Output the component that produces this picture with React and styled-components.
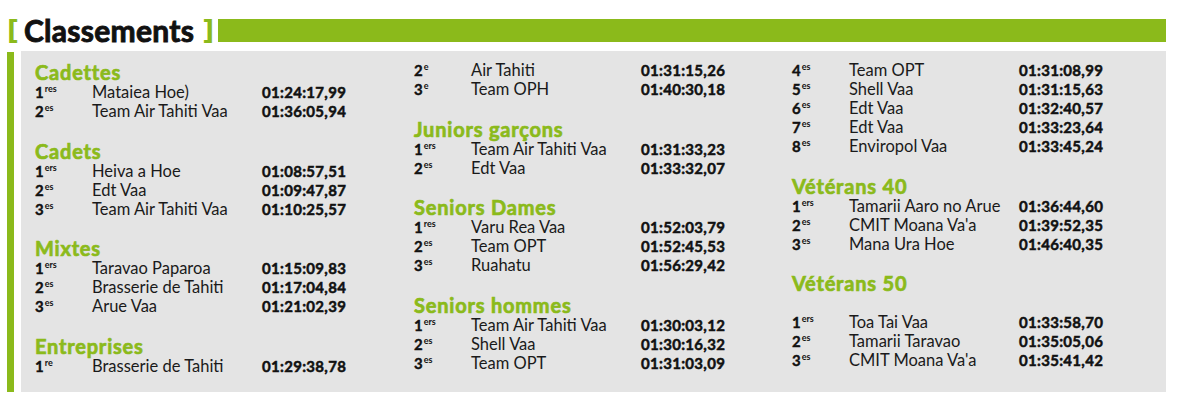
import React from 'react';
import styled, { createGlobalStyle } from 'styled-components';

const GREEN = '#8bba1b';

const GlobalStyle = createGlobalStyle`
  html, body {
    margin: 0;
    padding: 0;
    background: #fff;
  }
  body {
    font-family: Lato, "Open Sans", sans-serif;
    color: #111;
  }
`;

const Page = styled.div`
  width: 1159px;
  padding: 15px 0 0 7px;
`;

const Header = styled.div`
  display: flex;
  align-items: center;
  height: 30px;
  margin-bottom: 6px;
`;

const Bracket = styled.span`
  color: ${GREEN};
  font-family: "DejaVu Sans", sans-serif;
  font-size: 26px;
  font-weight: 700;
  line-height: 1;
  margin: ${({ $side }) => ($side === 'left' ? '0 5px 0 0' : '0 4px 0 8px')};
`;

const Title = styled.h1`
  margin: 0;
  font-family: Lato, sans-serif;
  font-weight: 700;
  font-size: 30px;
  line-height: 1;
  color: #111;
  -webkit-text-stroke: 0.9px #111;
  letter-spacing: 0.3px;
`;

const TitleBar = styled.div`
  flex: 1;
  height: 23px;
  background: ${GREEN};
`;

const Body = styled.div`
  display: flex;
  height: 341px;
`;

const Stripe = styled.div`
  width: 7px;
  margin: 1px 7px 0 0;
  background: ${GREEN};
`;

const Panel = styled.div`
  flex: 1;
  background: #e4e4e4;
  display: grid;
  grid-template-columns: 379px 378px 1fr;
  padding: 10px 0 0 14px;
`;

const Column = styled.div`
  display: flex;
  flex-direction: column;
  gap: 18.5px;
`;

const Section = styled.div`
  display: flex;
  flex-direction: column;
`;

const Heading = styled.h2`
  margin: 0;
  height: 22px;
  line-height: 22px;
  font-family: Lato, sans-serif;
  font-weight: 700;
  font-size: 20px;
  letter-spacing: 0.8px;
  color: ${GREEN};
  -webkit-text-stroke: 0.7px ${GREEN};
`;

const Row = styled.div`
  display: grid;
  grid-template-columns: 57px 170px auto;
  height: 19px;
  line-height: 19px;
  font-size: 16.5px;
`;

const Rank = styled.span`
  font-weight: 700;
  font-size: 15px;
  -webkit-text-stroke: 0.4px #111;

  sup {
    font-size: 9px;
    font-weight: 700;
    vertical-align: 6px;
    line-height: 0;
    margin-left: 1px;
    -webkit-text-stroke: 0;
  }
`;

const Name = styled.span`
  font-weight: 400;
  color: #1a1a1a;
  white-space: nowrap;
`;

const Time = styled.span`
  font-weight: 700;
  font-size: 15px;
  letter-spacing: 0.3px;
  -webkit-text-stroke: 0.5px #111;
`;

const columns = [
  [
    {
      title: 'Cadettes',
      rows: [
        ['1', 'res', 'Mataiea Hoe)', '01:24:17,99'],
        ['2', 'es', 'Team Air Tahiti Vaa', '01:36:05,94'],
      ],
    },
    {
      title: 'Cadets',
      rows: [
        ['1', 'ers', 'Heiva a Hoe', '01:08:57,51'],
        ['2', 'es', 'Edt Vaa', '01:09:47,87'],
        ['3', 'es', 'Team Air Tahiti Vaa', '01:10:25,57'],
      ],
    },
    {
      title: 'Mixtes',
      rows: [
        ['1', 'ers', 'Taravao Paparoa', '01:15:09,83'],
        ['2', 'es', 'Brasserie de Tahiti', '01:17:04,84'],
        ['3', 'es', 'Arue Vaa', '01:21:02,39'],
      ],
    },
    {
      title: 'Entreprises',
      rows: [['1', 're', 'Brasserie de Tahiti', '01:29:38,78']],
    },
  ],
  [
    {
      rows: [
        ['2', 'e', 'Air Tahiti', '01:31:15,26'],
        ['3', 'e', 'Team OPH', '01:40:30,18'],
      ],
    },
    {
      title: 'Juniors garçons',
      rows: [
        ['1', 'ers', 'Team Air Tahiti Vaa', '01:31:33,23'],
        ['2', 'es', 'Edt Vaa', '01:33:32,07'],
      ],
    },
    {
      title: 'Seniors Dames',
      rows: [
        ['1', 'res', 'Varu Rea Vaa', '01:52:03,79'],
        ['2', 'es', 'Team OPT', '01:52:45,53'],
        ['3', 'es', 'Ruahatu', '01:56:29,42'],
      ],
    },
    {
      title: 'Seniors hommes',
      rows: [
        ['1', 'ers', 'Team Air Tahiti Vaa', '01:30:03,12'],
        ['2', 'es', 'Shell Vaa', '01:30:16,32'],
        ['3', 'es', 'Team OPT', '01:31:03,09'],
      ],
    },
  ],
  [
    {
      rows: [
        ['4', 'es', 'Team OPT', '01:31:08,99'],
        ['5', 'es', 'Shell Vaa', '01:31:15,63'],
        ['6', 'es', 'Edt Vaa', '01:32:40,57'],
        ['7', 'es', 'Edt Vaa', '01:33:23,64'],
        ['8', 'es', 'Enviropol Vaa', '01:33:45,24'],
      ],
    },
    {
      title: 'Vétérans 40',
      rows: [
        ['1', 'ers', 'Tamarii Aaro no Arue', '01:36:44,60'],
        ['2', 'es', 'CMIT Moana Va\'a', '01:39:52,35'],
        ['3', 'es', 'Mana Ura Hoe', '01:46:40,35'],
      ],
    },
    {
      title: 'Vétérans 50',
      spaced: true,
      rows: [
        ['1', 'ers', 'Toa Tai Vaa', '01:33:58,70'],
        ['2', 'es', 'Tamarii Taravao', '01:35:05,06'],
        ['3', 'es', 'CMIT Moana Va\'a', '01:35:41,42'],
      ],
    },
  ],
];

const App = () => {
  return (
    <Page>
      <GlobalStyle />
      <Header>
        <Bracket $side="left">[</Bracket>
        <Title>Classements</Title>
        <Bracket $side="right">]</Bracket>
        <TitleBar />
      </Header>
      <Body>
        <Stripe />
        <Panel>
          {columns.map((col, ci) => (
            <Column key={ci}>
              {col.map((sec, si) => (
                <Section key={si}>
                  {sec.title && <Heading>{sec.title}</Heading>}
                  {sec.spaced && <Row />}
                  {sec.rows.map(([n, suf, name, time], ri) => (
                    <Row key={ri}>
                      <Rank>
                        {n}
                        <sup>{suf}</sup>
                      </Rank>
                      <Name>{name}</Name>
                      <Time>{time}</Time>
                    </Row>
                  ))}
                </Section>
              ))}
            </Column>
          ))}
        </Panel>
      </Body>
    </Page>
  );
};

export default App;
